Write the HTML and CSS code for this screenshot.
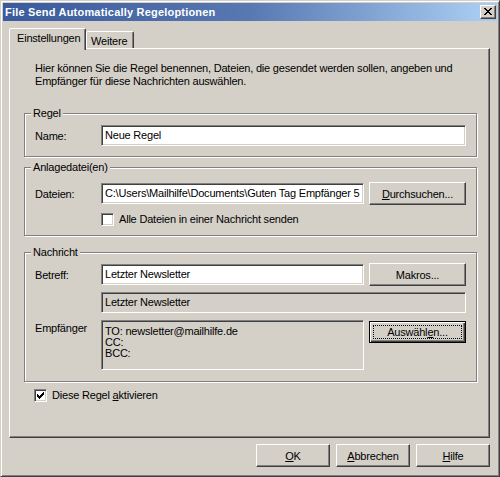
FILE: index.html
```html
<!DOCTYPE html>
<html lang="de">
<head>
<meta charset="utf-8">
<title>File Send Automatically Regeloptionen</title>
<link rel="stylesheet" href="styles.css">
</head>
<body>
<div class="window">
  <div class="titlebar">
    <span class="title">File Send Automatically Regeloptionen</span>
    <span class="close"><svg width="8" height="7" viewBox="0 0 8 7" shape-rendering="crispEdges"><path d="M0 0h2v1h-2zM6 0h2v1h-2zM1 1h2v1h-2zM5 1h2v1h-2zM2 2h4v1h-4zM3 3h2v1h-2zM2 4h4v1h-4zM1 5h2v1h-2zM5 5h2v1h-2zM0 6h2v1h-2zM6 6h2v1h-2z" fill="#000"/></svg></span>
  </div>
  <div class="body">
    <div class="tabs">
      <div class="tab active">Einstellungen</div>
      <div class="tab">Weitere</div>
    </div>
    <div class="panel">
      <p class="desc">Hier können Sie die Regel benennen, Dateien, die gesendet werden sollen, angeben und<br>Empfänger für diese Nachrichten auswählen.</p>

      <div class="group g-regel">
        <div class="legend">Regel</div>
        <div class="row r-name">
          <span class="label">Name:</span>
          <div class="field w-long">Neue Regel</div>
        </div>
      </div>

      <div class="group g-anlage">
        <div class="legend">Anlagedatei(en)</div>
        <div class="row r-dateien">
          <span class="label">Dateien:</span>
          <div class="field w-short"><span class="clip">C:\Users\Mailhilfe\Documents\Guten Tag Empfänger 5</span></div>
          <div class="btn w-side"><span><u>D</u>urchsuchen...</span></div>
        </div>
        <div class="row r-alle">
          <span class="label"></span>
          <span class="cb"></span>
          <span class="cb-text">Alle Dateien in einer Nachricht senden</span>
        </div>
      </div>

      <div class="group g-nachricht">
        <div class="legend">Nachricht</div>
        <div class="row r-betreff">
          <span class="label">Betreff:</span>
          <div class="field w-short">Letzter Newsletter</div>
          <div class="btn w-side"><span>Makros...</span></div>
        </div>
        <div class="row r-preview">
          <span class="label"></span>
          <div class="field ro w-long">Letzter Newsletter</div>
        </div>
        <div class="row r-empf">
          <span class="label empf-label">Empfänger</span>
          <div class="field ro recip w-short">TO: newsletter@mailhilfe.de<br>CC:<br>BCC:</div>
          <div class="btn w-side default"><span class="focus">Auswähl<u>e</u>n...</span></div>
        </div>
      </div>

      <div class="row r-aktiv">
        <span class="cb checked"><svg width="11" height="11" viewBox="1 1 11 11" shape-rendering="crispEdges"><path d="M3 5h1v3h-1zM4 6h1v3h-1zM5 7h1v3h-1zM6 6h1v3h-1zM7 5h1v3h-1zM8 4h1v3h-1zM9 3h1v3h-1z" fill="#000"/></svg></span>
        <span class="cb-text">Diese Regel <u>a</u>ktivieren</span>
      </div>
    </div>
    <div class="buttons">
      <div class="btn w-foot"><span><u>O</u>K</span></div>
      <div class="btn w-foot"><span><u>A</u>bbrechen</span></div>
      <div class="btn w-foot"><span><u>H</u>ilfe</span></div>
    </div>
  </div>
</div>
</body>
</html>
```

FILE: styles.css
```css
html, body {
  margin: 0;
  padding: 0;
  background: #d4d0c8;
}
body {
  font-family: "Liberation Sans", Arial, sans-serif;
  font-size: 11px;
  letter-spacing: -0.2px;
  color: #000;
}
.window {
  width: 500px;
  height: 477px;
  box-sizing: border-box;
  border: 1px solid;
  border-color: #d4d0c8 #404040 #404040 #d4d0c8;
  box-shadow: inset 1px 1px #fff, inset -1px -1px #808080;
  padding: 2px;
  background: #d4d0c8;
}
.titlebar {
  height: 18px;
  display: flex;
  align-items: center;
  justify-content: space-between;
  padding: 0 1px 0 2px;
  background: linear-gradient(to right, #3a5a9c 0%, #5878b2 50%, #a6caf0 96%);
}
.title {
  color: #fff;
  font-weight: bold;
  font-size: 11px;
  letter-spacing: 0.2px;
}
.close {
  width: 16px;
  height: 14px;
  box-sizing: border-box;
  display: flex;
  align-items: center;
  justify-content: center;
  background: #d4d0c8;
  border: 1px solid;
  border-color: #fff #404040 #404040 #fff;
  box-shadow: inset -1px -1px #808080;
}
.close svg { display: block; margin: 0 1px 1px 0; }

.body {
  padding: 0 7px 0 6px;
}
.tabs {
  display: flex;
  align-items: flex-end;
  height: 20px;
  margin-top: 7px;
}
.tab {
  box-sizing: border-box;
  background: #d4d0c8;
  border: 1px solid;
  border-bottom: none;
  border-color: #fff #404040 transparent #fff;
  box-shadow: inset -1px 0 #808080;
  border-radius: 2px 2px 0 0;
  white-space: nowrap;
  line-height: 13px;
}
.tab.active {
  width: 77px;
  height: 22px;
  margin-bottom: -2px;
  padding: 3px 0 0 7px;
  position: relative;
  z-index: 1;
}
.tab:not(.active) {
  width: 48px;
  height: 17px;
  padding: 3px 0 0 4px;
}
.panel {
  height: 390px;
  box-sizing: border-box;
  border: 1px solid;
  border-color: #fff #404040 #404040 #fff;
  box-shadow: inset -1px -1px #808080;
  overflow: hidden;
}
.desc {
  margin: 13px 0 0 25px;
  line-height: 13px;
}
.group {
  margin-left: 14px;
  width: 453px;
  box-sizing: border-box;
  border: 1px solid #808080;
  box-shadow: inset 1px 1px #fff, 1px 1px #fff;
}
.g-regel { margin-top: 25px; padding-bottom: 10px; }
.g-anlage { margin-top: 10px; padding-bottom: 9px; }
.g-nachricht { margin-top: 16px; padding-bottom: 11px; }
.legend {
  width: fit-content;
  height: 13px;
  line-height: 13px;
  margin: -7px 0 0 6px;
  padding: 0 2px;
  background: #d4d0c8;
}
.row {
  display: flex;
  align-items: center;
  padding-left: 10px;
}
.label {
  width: 66px;
  flex: none;
}
.r-name { margin-top: 5px; }
.r-dateien { margin-top: 8px; }
.r-alle { margin-top: 8px; }
.r-betreff { margin-top: 4px; }
.r-preview { margin-top: 6px; }
.r-empf { margin-top: 7px; align-items: flex-start; }
.empf-label { margin-top: 2px; line-height: 13px; }
.r-aktiv { margin: 7px 0 0 24px; padding-left: 0; }

.field {
  height: 21px;
  box-sizing: border-box;
  border: 1px solid;
  border-color: #808080 #fff #fff #808080;
  box-shadow: inset 1px 1px #404040, inset -1px -1px #d4d0c8;
  background: #fff;
  padding: 0 2px 0 3px;
  line-height: 19px;
  white-space: nowrap;
  overflow: hidden;
  flex: none;
}
.clip {
  display: block;
  overflow: hidden;
  white-space: nowrap;
}
.field.ro { background: #d4d0c8; }
.recip {
  height: 50px;
  line-height: 11px;
  padding-top: 5px;
  white-space: normal;
}
.w-long { width: 365px; }
.w-short { width: 263px; margin-right: 5px; }
.w-side { width: 97px; }
.w-foot { width: 74px; }

.btn {
  height: 23px;
  box-sizing: border-box;
  border: 1px solid;
  border-color: #fff #404040 #404040 #fff;
  box-shadow: inset -1px -1px #808080;
  background: #d4d0c8;
  display: flex;
  align-items: center;
  justify-content: center;
  flex: none;
  white-space: nowrap;
}
.btn.default {
  height: 22px;
  margin-top: 1px;
  border: 1px solid #000;
  box-shadow: inset 1px 1px #fff, inset -1px -1px #404040, inset -2px -2px #808080;
}
.focus {
  display: flex;
  align-items: center;
  justify-content: center;
  box-sizing: border-box;
  width: 89px;
  height: 14px;
  border: 1px dotted #000;
}

.cb {
  width: 13px;
  height: 13px;
  box-sizing: border-box;
  border: 1px solid;
  border-color: #808080 #fff #fff #808080;
  box-shadow: inset 1px 1px #404040, inset -1px -1px #d4d0c8;
  background: #fff;
  flex: none;
}
.cb svg { display: block; }
.cb-text {
  margin-left: 5px;
  line-height: 13px;
}

.buttons {
  display: flex;
  justify-content: flex-end;
  gap: 6px;
  margin-top: 6px;
}
```
